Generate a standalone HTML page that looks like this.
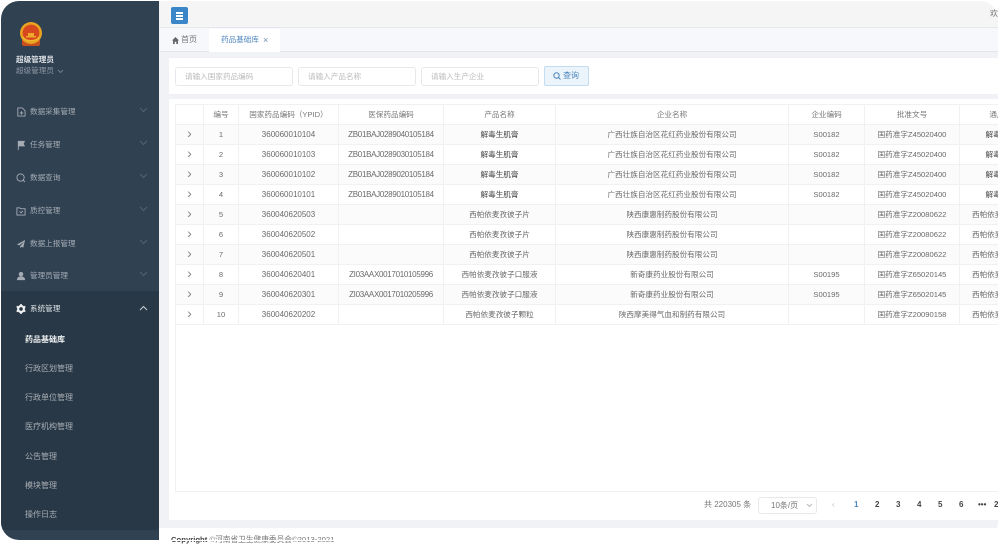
<!DOCTYPE html>
<html lang="zh"><head><meta charset="utf-8"><title>药品基础库</title>
<style>
*{box-sizing:border-box}
html,body{margin:0;padding:0;background:#fff}
body{width:998px;height:541px;overflow:hidden;position:relative;font-family:"Liberation Sans","Noto Sans CJK SC",sans-serif;font-size:8px;color:#666;filter:blur(.3px)}
.a{position:absolute;white-space:nowrap}
#frame{position:absolute;left:1px;top:1px;width:997px;height:539px;border-radius:18px;overflow:hidden;background:#f1f2f5}
#side{position:absolute;left:0;top:0;width:158px;height:539px;background:#304152}
#sub{position:absolute;left:0;top:290px;width:158px;height:239px;background:#293846}
.m{position:absolute;left:29px;color:#a4abb3;line-height:12px;white-space:nowrap;font-size:7.6px;margin-top:1px}
.s{position:absolute;left:24px;color:#a7aeb5;line-height:12px;white-space:nowrap;margin-top:1px}
.ic{position:absolute;left:15px;width:10px;height:10px;margin-top:1px}
.ch{position:absolute;left:138px;width:9px;height:6px;margin-top:1px}
.inp{position:absolute;top:67px;width:118px;height:19px;background:#fff;border:1px solid #e6e8ec;border-radius:3px;color:#bbb;line-height:17px;padding-left:9px;font-size:7.6px}
table{position:absolute;left:175px;top:104px;border-collapse:collapse;table-layout:fixed;width:874px;background:#fff}
td,th{border:1px solid #f0f1f3;height:20px;padding:0;text-align:center;font-weight:400;font-size:7.6px;color:#6a6a6a;white-space:nowrap;overflow:hidden;line-height:12px}
th{color:#777}
td:first-child{font-size:14px;color:#888;line-height:14px;padding-bottom:3px}
td:nth-child(3){font-size:8px}
td:nth-child(4){font-size:8px;letter-spacing:-.3px}
tr:nth-child(even) td{background:#fbfbfc}
.b{color:#444!important}
.l{text-align:left;padding-left:12px}
.p{position:absolute;top:499px;font-size:8px;font-weight:700;color:#444;line-height:12px}
</style></head><body>
<div id="frame">
 <div id="side">
  <div id="sub"></div>
  <svg class="a" style="left:17px;top:20px" width="26" height="27" viewBox="0 0 26 27"><path d="M4 19h18v4a2 2 0 0 1-2 2H6a2 2 0 0 1-2-2z" fill="#c8501f"/><circle cx="13" cy="12" r="11" fill="#e8a321"/><circle cx="13" cy="12" r="8.400" fill="#d8481f"/><path d="M8 15h10v1.500H8zM10 12h6v3h-6z" fill="#eda92a"/><path d="M5 16c2 5 14 5 16 0" stroke="#f0b82e" stroke-width="1.500" fill="none"/></svg>
  <div class="a" style="left:15px;top:53px;font-weight:700;color:#dfe3e7;line-height:12px;font-size:7.6px">超级管理员</div>
  <div class="a" style="left:15px;top:64px;color:#8c97a3;line-height:12px;font-size:7.6px">超级管理员</div>
  <svg class="a" style="left:56px;top:68px" width="7" height="5" viewBox="0 0 7 5"><path d="M1 1l2.500 2.500L6 1" stroke="#6f7d8b" fill="none"/></svg>

  <svg class="ic" style="top:105px" viewBox="0 0 11 11"><path d="M2 1h5l3 3v6H2z" fill="none" stroke="#a4abb3"/><path d="M4 6.500h4M6 4.500v4" stroke="#a4abb3"/></svg>
  <div class="m" style="top:104px">数据采集管理</div>
  <svg class="ch" style="top:105px" viewBox="0 0 9 6"><path d="M1 1l3.500 3.500L8 1" stroke="#55636f" fill="none"/></svg>

  <svg class="ic" style="top:138px" viewBox="0 0 11 11"><path d="M2 1h8L8.500 4 10 7H3v4H2z" fill="#a4abb3"/></svg>
  <div class="m" style="top:137px">任务管理</div>
  <svg class="ch" style="top:138px" viewBox="0 0 9 6"><path d="M1 1l3.500 3.500L8 1" stroke="#55636f" fill="none"/></svg>

  <svg class="ic" style="top:171px" viewBox="0 0 11 11"><circle cx="5" cy="5" r="4" fill="none" stroke="#a4abb3"/><path d="M8 8l2 2" stroke="#a4abb3"/></svg>
  <div class="m" style="top:170px">数据查询</div>
  <svg class="ch" style="top:171px" viewBox="0 0 9 6"><path d="M1 1l3.500 3.500L8 1" stroke="#55636f" fill="none"/></svg>

  <svg class="ic" style="top:204px" viewBox="0 0 11 11"><path d="M1 2h3l1 1h5v7H1z" fill="none" stroke="#a4abb3"/><path d="M4 6l1.500 1.500L7.500 5.500" stroke="#a4abb3" fill="none"/></svg>
  <div class="m" style="top:203px">质控管理</div>
  <svg class="ch" style="top:204px" viewBox="0 0 9 6"><path d="M1 1l3.500 3.500L8 1" stroke="#55636f" fill="none"/></svg>

  <svg class="ic" style="top:237px" viewBox="0 0 11 11"><path d="M10 1L1 6l2.500 1L9 3 4.500 8v2l1.500-1.500L8 9.500z" fill="#a4abb3"/></svg>
  <div class="m" style="top:236px">数据上报管理</div>
  <svg class="ch" style="top:237px" viewBox="0 0 9 6"><path d="M1 1l3.500 3.500L8 1" stroke="#55636f" fill="none"/></svg>

  <svg class="ic" style="top:269px" viewBox="0 0 11 11"><circle cx="5.500" cy="3.500" r="2.500" fill="#a4abb3"/><path d="M1 10c0-3 2-4 4.500-4s4.500 1 4.500 4z" fill="#a4abb3"/></svg>
  <div class="m" style="top:268px">管理员管理</div>
  <svg class="ch" style="top:269px" viewBox="0 0 9 6"><path d="M1 1l3.500 3.500L8 1" stroke="#55636f" fill="none"/></svg>

  <svg class="ic" style="top:302px" viewBox="0 0 11 11"><circle cx="5.500" cy="5.500" r="3.200" fill="none" stroke="#eef0f2" stroke-width="2.400"/><path d="M5.500 0v2M5.500 9v2M0.700 2.700l1.700 1M8.600 7.300l1.700 1M0.700 8.300l1.700-1M8.600 3.700l1.700-1" stroke="#eef0f2" stroke-width="1.800"/></svg>
  <div class="m" style="top:301px;color:#dfe3e7">系统管理</div>
  <svg class="ch" style="top:303px" viewBox="0 0 9 6"><path d="M1 5l3.500-3.500L8 5" stroke="#c9ced3" fill="none"/></svg>

  <div class="s" style="top:332px;color:#eef0f2;font-weight:700">药品基础库</div>
  <div class="s" style="top:361px">行政区划管理</div>
  <div class="s" style="top:390px">行政单位管理</div>
  <div class="s" style="top:419px">医疗机构管理</div>
  <div class="s" style="top:449px">公告管理</div>
  <div class="s" style="top:478px">模块管理</div>
  <div class="s" style="top:507px">操作日志</div>
 </div>

 <div class="a" style="left:159px;top:0;width:838px;height:27px;background:#f5f5f6;border-bottom:1px solid #e5e7ea"></div>
 <div class="a" style="left:159px;top:27px;width:838px;height:24px;background:#f7f8fb;border-bottom:1px solid #e2e4e8"></div>
</div>

<div class="a" style="left:171px;top:7px;width:17px;height:17px;background:#3a86c8;border-radius:2px"></div>
<div class="a" style="left:176px;top:12px;width:7px;height:1.500px;background:#fff"></div>
<div class="a" style="left:176px;top:15px;width:7px;height:1.500px;background:#fff"></div>
<div class="a" style="left:176px;top:18px;width:7px;height:1.500px;background:#fff"></div>
<div class="a" style="left:990px;top:8px;color:#777;line-height:12px;width:8px;overflow:hidden">欢迎</div>

<svg class="a" style="left:172px;top:37px" width="7" height="7" viewBox="0 0 7 7"><path d="M3.500 0L7 3.500H6V7H4.300V4.800H2.700V7H1V3.500H0z" fill="#666"/></svg>
<div class="a" style="left:181px;top:34px;color:#777;line-height:12px">首页</div>
<div class="a" style="left:209px;top:29px;width:71px;height:23px;background:#fff"></div>
<div class="a" style="left:221px;top:34px;color:#4f86bd;line-height:12px;font-size:7.6px">药品基础库</div>
<div class="a" style="left:263px;top:34px;color:#6d8cab;line-height:12px;font-size:9px">×</div>

<div class="a" style="left:169px;top:58px;width:829px;height:36px;background:#fff"></div>
<div class="inp" style="left:175px">请输入国家药品编码</div>
<div class="inp" style="left:298px">请输入产品名称</div>
<div class="inp" style="left:421px">请输入生产企业</div>
<div class="a" style="left:544px;top:66px;width:45px;height:20px;background:#ebf4fb;border:1px solid #c4dcf0;border-radius:2px"></div>
<svg class="a" style="left:553px;top:72px" width="8" height="8" viewBox="0 0 8 8"><circle cx="3.500" cy="3.500" r="2.700" fill="none" stroke="#4f86bd"/><path d="M5.500 5.500l2 2" stroke="#4f86bd"/></svg>
<div class="a" style="left:563px;top:70px;color:#4f86bd;line-height:12px">查询</div>

<div class="a" style="left:169px;top:99px;width:829px;height:421px;background:#fff"></div>
<div class="a" style="left:175px;top:104px;width:823px;height:388px;border:1px solid #f0f1f3;border-right:0"></div>

<div class="a" style="left:175px;top:104px;width:823px;height:222px;overflow:hidden">
<table style="left:0;top:0">
<colgroup><col style="width:28px"><col style="width:35px"><col style="width:100px"><col style="width:105px"><col style="width:112px"><col style="width:233px"><col style="width:76px"><col style="width:95px"><col style="width:90px"></colgroup>
<tr><th></th><th>编号</th><th>国家药品编码（YPID）</th><th>医保药品编码</th><th>产品名称</th><th>企业名称</th><th>企业编码</th><th>批准文号</th><th>通用名称</th></tr>
<tr><td>›</td><td>1</td><td>360060010104</td><td>ZB01BAJ0289040105184</td><td class="b">解毒生肌膏</td><td>广西壮族自治区花红药业股份有限公司</td><td>S00182</td><td>国药准字Z45020400</td><td class="b">解毒生肌膏</td></tr>
<tr><td>›</td><td>2</td><td>360060010103</td><td>ZB01BAJ0289030105184</td><td class="b">解毒生肌膏</td><td>广西壮族自治区花红药业股份有限公司</td><td>S00182</td><td>国药准字Z45020400</td><td class="b">解毒生肌膏</td></tr>
<tr><td>›</td><td>3</td><td>360060010102</td><td>ZB01BAJ0289020105184</td><td class="b">解毒生肌膏</td><td>广西壮族自治区花红药业股份有限公司</td><td>S00182</td><td>国药准字Z45020400</td><td class="b">解毒生肌膏</td></tr>
<tr><td>›</td><td>4</td><td>360060010101</td><td>ZB01BAJ0289010105184</td><td class="b">解毒生肌膏</td><td>广西壮族自治区花红药业股份有限公司</td><td>S00182</td><td>国药准字Z45020400</td><td class="b">解毒生肌膏</td></tr>
<tr><td>›</td><td>5</td><td>360040620503</td><td></td><td>西帕依麦孜彼子片</td><td>陕西康惠制药股份有限公司</td><td></td><td>国药准字Z20080622</td><td class="l">西帕依麦孜彼子片</td></tr>
<tr><td>›</td><td>6</td><td>360040620502</td><td></td><td>西帕依麦孜彼子片</td><td>陕西康惠制药股份有限公司</td><td></td><td>国药准字Z20080622</td><td class="l">西帕依麦孜彼子片</td></tr>
<tr><td>›</td><td>7</td><td>360040620501</td><td></td><td>西帕依麦孜彼子片</td><td>陕西康惠制药股份有限公司</td><td></td><td>国药准字Z20080622</td><td class="l">西帕依麦孜彼子片</td></tr>
<tr><td>›</td><td>8</td><td>360040620401</td><td>ZI03AAX0017010105996</td><td>西帕依麦孜彼子口服液</td><td>新奇康药业股份有限公司</td><td>S00195</td><td>国药准字Z65020145</td><td class="l">西帕依麦孜彼子口服液</td></tr>
<tr><td>›</td><td>9</td><td>360040620301</td><td>ZI03AAX0017010205996</td><td>西帕依麦孜彼子口服液</td><td>新奇康药业股份有限公司</td><td>S00195</td><td>国药准字Z65020145</td><td class="l">西帕依麦孜彼子口服液</td></tr>
<tr><td>›</td><td>10</td><td>360040620202</td><td></td><td>西帕依麦孜彼子颗粒</td><td>陕西摩美得气血和制药有限公司</td><td></td><td>国药准字Z20090158</td><td class="l">西帕依麦孜彼子颗粒</td></tr>
</table>
</div>

<div class="a" style="left:704px;top:499px;color:#777;line-height:12px">共 220305 条</div>
<div class="a" style="left:758px;top:497px;width:59px;height:17px;border:1px solid #e6e8ec;border-radius:3px;color:#777;line-height:15px;padding-left:12px">10条/页</div>
<svg class="a" style="left:806px;top:503px" width="7" height="5" viewBox="0 0 7 5"><path d="M1 1l2.500 2.500L6 1" stroke="#bbb" fill="none"/></svg>
<div class="a" style="left:832px;top:499px;color:#bbb;line-height:12px">‹</div>
<div class="p" style="left:854px;color:#4f86bd">1</div>
<div class="p" style="left:875px">2</div>
<div class="p" style="left:896px">3</div>
<div class="p" style="left:917px">4</div>
<div class="p" style="left:938px">5</div>
<div class="p" style="left:959px">6</div>
<div class="p" style="left:978px">•••</div>
<div class="p" style="left:994px">2</div>

<div class="a" style="left:159px;top:528px;width:839px;height:13px;background:#fff"></div>
<div class="a" style="left:171px;top:534px;line-height:12px;color:#777;font-size:7.700px"><b style="color:#444">Copyright</b> ©河南省卫生健康委员会©2013-2021</div>
<div class="a" style="left:159px;top:540px;width:839px;height:1px;background:#fff"></div>
</body></html>
